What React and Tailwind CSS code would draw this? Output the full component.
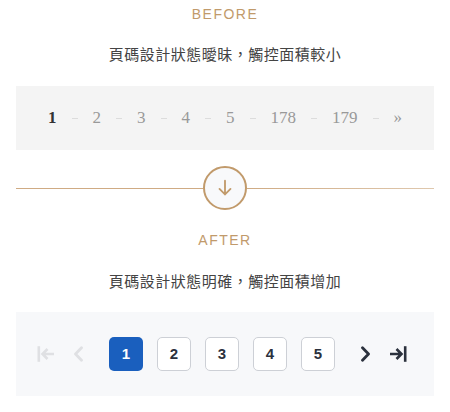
import React from "react";

const beforePages = ["1", "2", "3", "4", "5", "178", "179"];

const FirstIcon = ({ className }) => (
  <svg width="18" height="16" viewBox="0 0 18 16" fill="none" className={className}>
    <path d="M1.8 1.5v13" stroke="currentColor" strokeWidth="2.6" strokeLinecap="square" />
    <path d="M5.5 8H17M10.5 3L5.5 8l5 5" stroke="currentColor" strokeWidth="2.6" strokeLinejoin="miter" />
  </svg>
);

const LastIcon = ({ className }) => (
  <svg width="18" height="16" viewBox="0 0 18 16" fill="none" className={className}>
    <path d="M16.2 1.5v13" stroke="currentColor" strokeWidth="2.6" strokeLinecap="square" />
    <path d="M12.5 8H1M7.5 3l5 5-5 5" stroke="currentColor" strokeWidth="2.6" strokeLinejoin="miter" />
  </svg>
);

const Chevron = ({ dir, className }) => (
  <svg width="12" height="16" viewBox="0 0 12 16" fill="none" className={className}>
    <path
      d={dir === "left" ? "M9.5 1.8L3.5 8l6 6.2" : "M2.5 1.8L8.5 8l-6 6.2"}
      stroke="currentColor"
      strokeWidth="2.8"
      strokeLinecap="round"
      strokeLinejoin="round"
    />
  </svg>
);

const App = () => {
  return (
    <div className="w-[450px] h-[412px] bg-white px-4 flex flex-col font-['Liberation_Sans','Noto_Sans_CJK_TC',sans-serif]">
      <div className="pt-1 text-center text-sm leading-5 tracking-[1.5px] text-[#c19a6b]">BEFORE</div>
      <div className="mt-5 text-center text-[15px] leading-[22px] tracking-[0.5px] text-[#444]">
        頁碼設計狀態曖昧，觸控面積較小
      </div>

      <div className="mt-5 h-16 bg-[#f4f4f4] flex items-center justify-center gap-[15px] font-['Liberation_Serif',serif] text-[17px]">
        {beforePages.map((p, i) => (
          <React.Fragment key={p}>
            <span className={i === 0 ? "text-[#333] font-bold" : "text-[#999]"}>{p}</span>
            <span className="w-[6px] h-px bg-[#dcdcdc]" />
          </React.Fragment>
        ))}
        <span className="text-[#999]">»</span>
      </div>

      <div className="mt-4 flex items-center">
        <div className="flex-1 h-px bg-[#cfab84]" />
        <div className="w-11 h-11 rounded-full border-2 border-[#c19a6b] bg-[#f8f9fb] flex items-center justify-center">
          <svg width="22" height="22" viewBox="0 0 24 24" fill="none" stroke="#c19a6b" strokeWidth="2" strokeLinecap="round" strokeLinejoin="round">
            <path d="M12 4v15M6 13l6 6 6-6" />
          </svg>
        </div>
        <div className="flex-1 h-px bg-gradient-to-r from-[#cfab84] to-[#dfc8ae]" />
      </div>

      <div className="mt-5 text-center text-sm leading-5 tracking-[1.5px] text-[#c19a6b]">AFTER</div>
      <div className="mt-[21px] text-center text-[15px] leading-[22px] tracking-[0.5px] text-[#444]">
        頁碼設計狀態明確，觸控面積增加
      </div>

      <div className="mt-[19px] h-[84px] bg-[#f7f8fa] flex items-center pl-5">
        <div className="w-5 flex justify-center text-[#dfe0e3]">
          <FirstIcon />
        </div>
        <div className="ml-3 w-5 flex justify-center text-[#dfe0e3]">
          <Chevron dir="left" />
        </div>
        <div className="ml-[21px] flex gap-[14px] font-['Liberation_Sans',sans-serif] font-bold text-[15px]">
          {["1", "2", "3", "4", "5"].map((n, i) => (
            <div
              key={n}
              className={
                i === 0
                  ? "w-[34px] h-[34px] rounded-[5px] bg-[#1a5fbe] text-white flex items-center justify-center"
                  : "w-[34px] h-[34px] rounded-[5px] bg-white border border-[#cdd0d6] text-[#2b313d] flex items-center justify-center"
              }
            >
              {n}
            </div>
          ))}
        </div>
        <div className="ml-[21px] w-5 flex justify-center text-[#2b313d]">
          <Chevron dir="right" />
        </div>
        <div className="ml-3 w-5 flex justify-center text-[#2b313d]">
          <LastIcon />
        </div>
      </div>
    </div>
  );
};

export default App;
